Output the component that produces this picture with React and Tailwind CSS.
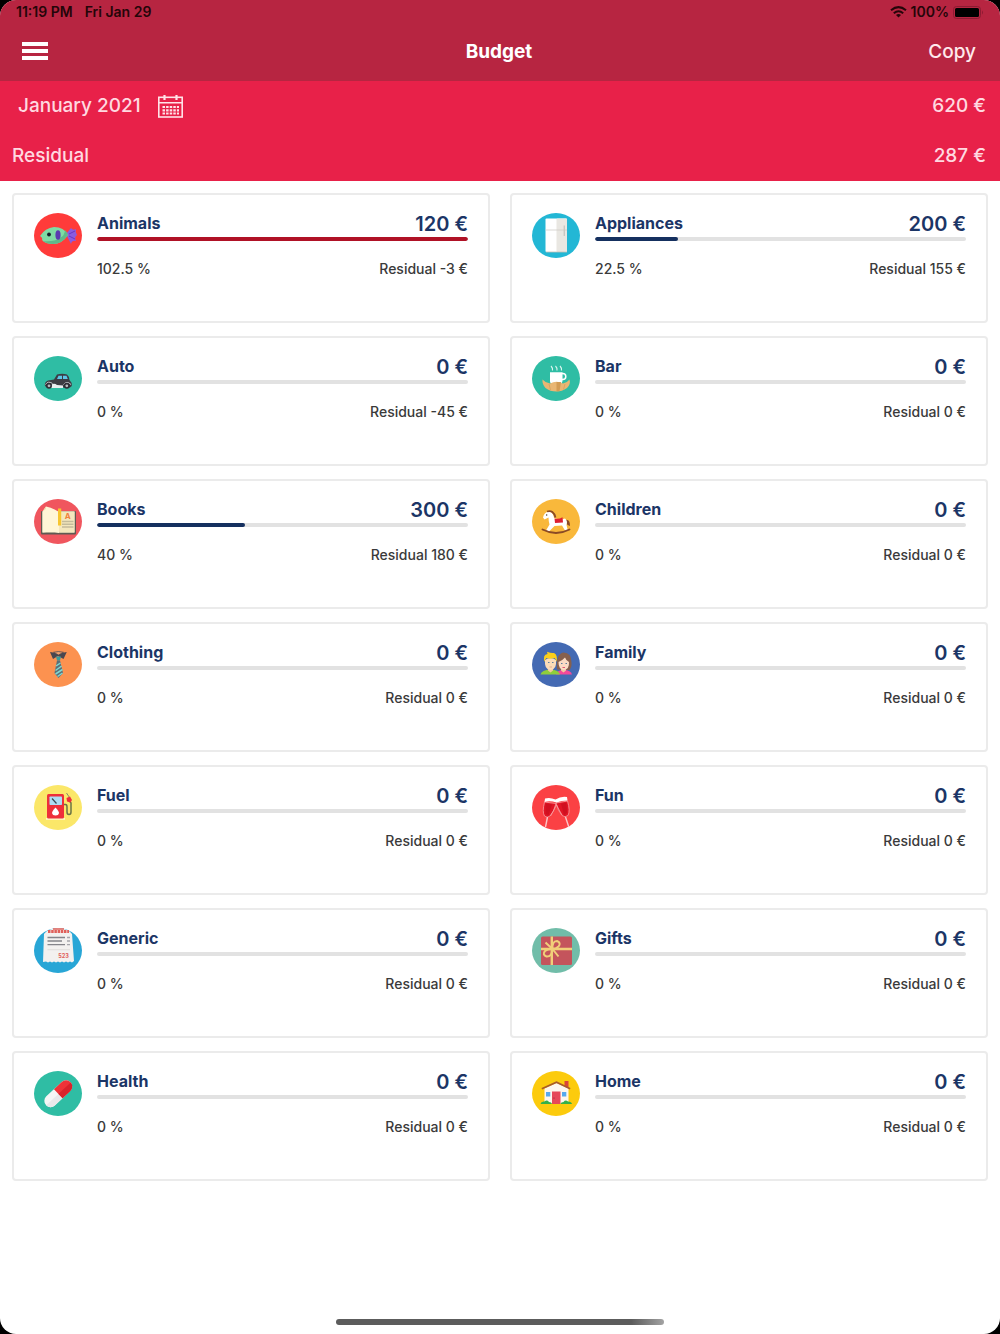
import React from "react";
import { clsx } from "clsx";

const categories = [
  { name: "Animals", budget: 120, percent: 102.5, residual: -3, icon: FishIcon },
  { name: "Appliances", budget: 200, percent: 22.5, residual: 155, icon: FridgeIcon },
  { name: "Auto", budget: 0, percent: 0, residual: -45, icon: CarIcon },
  { name: "Bar", budget: 0, percent: 0, residual: 0, icon: BarIcon },
  { name: "Books", budget: 300, percent: 40, residual: 180, icon: BookIcon },
  { name: "Children", budget: 0, percent: 0, residual: 0, icon: HorseIcon },
  { name: "Clothing", budget: 0, percent: 0, residual: 0, icon: TieIcon },
  { name: "Family", budget: 0, percent: 0, residual: 0, icon: FamilyIcon },
  { name: "Fuel", budget: 0, percent: 0, residual: 0, icon: FuelIcon },
  { name: "Fun", budget: 0, percent: 0, residual: 0, icon: GlassesIcon },
  { name: "Generic", budget: 0, percent: 0, residual: 0, icon: ReceiptIcon },
  { name: "Gifts", budget: 0, percent: 0, residual: 0, icon: GiftIcon },
  { name: "Health", budget: 0, percent: 0, residual: 0, icon: PillIcon },
  { name: "Home", budget: 0, percent: 0, residual: 0, icon: HouseIcon },
];

// every category icon is drawn on the same 48x45 disc
function Disc({ color, children }) {
  return (
    <svg viewBox="0 0 48 45" className="h-[45px] w-12 shrink-0" aria-hidden="true">
      <ellipse cx="24" cy="22.5" rx="24" ry="22.5" fill={color} />
      {children}
    </svg>
  );
}

function FishIcon() {
  return (
    <Disc color="#ff3b3a">
      <path d="M32 21 L37 15 Q39 18 42 16 Q41 19 43 22 Q40 24 42 28 Q38 27 37 31 Z" fill="#8a5be0" />
      <path d="M35 21 L41 18 M35 23 L41 26" stroke="#6a35c4" strokeWidth="1" />
      <path d="M6 23 Q11 15 20 14 Q30 14 34 22 Q28 31 19 31 Q11 31 8 27 Q9 25 6 23 Z" fill="#7fdca4" />
      <path d="M34 22 Q28 31 19 31 Q13 31 9 28 Q20 29 26 25 Q31 22 31 17 Q33 19 34 22 Z" fill="#5fb98a" />
      <circle cx="15" cy="21.5" r="1.9" fill="#16202a" />
      <ellipse cx="24" cy="22" rx="2.6" ry="4.8" fill="#5b3bb0" />
    </Disc>
  );
}

function FridgeIcon() {
  return (
    <Disc color="#23b7d5">
      <rect x="13.5" y="5.5" width="21.5" height="33.5" rx="1" fill="#ffffff" />
      <rect x="24.5" y="5.5" width="10.5" height="33.5" rx="1" fill="#e9e7e2" />
      <path d="M13.5 17 H35" stroke="#cfcdc8" strokeWidth="0.8" />
      <path d="M32.3 12.5 V23" stroke="#c9c7c2" strokeWidth="1.4" />
      <path d="M14 39 H35" stroke="#c6bfb4" strokeWidth="0.8" />
    </Disc>
  );
}

function CarIcon() {
  return (
    <Disc color="#2fbda4">
      <path d="M11 30 Q10 26 14 24.5 L20 23.5 L23 18.6 Q28 17 33 18.5 Q35 20 35.5 24 Q38 26 37.8 30 L36 31.5 H13 Z" fill="#3d3c44" />
      <path d="M17 29 Q20 26.5 23 29 L29 29.5 V32 H17 Z" fill="#e9eef0" />
      <path d="M11.5 28.500 Q14 24.500 18.500 27.500 M29.500 28.500 Q33 24.500 37 28.500" stroke="#d9dfe2" strokeWidth="0.9" fill="none" />
      <path d="M23 23 L24.5 19.8 H28 V23 Z M29 19.8 H32.5 L33.8 23 H29 Z" fill="#5cc6e8" />
      <circle cx="15" cy="29.8" r="3" fill="#2e2d35" />
      <circle cx="15" cy="29.8" r="1.4" fill="#b9bcc0" />
      <circle cx="32.8" cy="29.8" r="3" fill="#2e2d35" />
      <circle cx="32.8" cy="29.8" r="1.4" fill="#b9bcc0" />
    </Disc>
  );
}

function BarIcon() {
  return (
    <Disc color="#2fbda4">
      <path d="M19 10 Q21 12 20.5 14.5 M23.5 10 Q25.5 12 25 14.5 M28 10 Q30 12 29.5 14.5" stroke="#d8f5ee" strokeWidth="1.1" fill="none" />
      <circle cx="30.8" cy="20.5" r="3" fill="none" stroke="#ffffff" strokeWidth="1.5" />
      <path d="M18 16.2 H30.5 V25 Q30 28 27 28 H21 Q18 28 18 25 Z" fill="#ffffff" />
      <path d="M10.5 23.5 Q13 26.5 18 27.5 Q24.5 24 31 27.5 Q35.5 26.5 37.5 23.5 Q39 28 35 32 Q30 35.5 24.5 35.5 Q18 35.5 13.5 32 Q10 28 10.5 23.5 Z" fill="#e9b673" />
      <path d="M24.5 26 H29 L27.5 35.3 H24.5 Z" fill="#d39c55" />
      <path d="M17 28 L18.5 34 M33 28 L31.5 33.5" stroke="#d8a35f" strokeWidth="0.9" />
    </Disc>
  );
}

function BookIcon() {
  return (
    <Disc color="#f0565e">
      <rect x="7" y="12" width="35" height="23.5" rx="1" fill="#5f5a52" />
      <rect x="8.5" y="12.5" width="32" height="21" fill="#fdf3cf" />
      <rect x="25" y="12.5" width="15.5" height="21" fill="#f4e7bd" />
      <path d="M8.5 12.5 L12 7.5 Q18 8.5 25 13 V34 Q18 32 8.5 33.5 Z" fill="#fff6d6" />
      <path d="M8.5 12.5 L12 10 V7.5" fill="#f0dfae" />
      <rect x="24" y="9.5" width="3.2" height="17" fill="#f7c62f" />
      <text x="33.8" y="19.5" textAnchor="middle" fontSize="8" fontWeight="700" fill="#f0813c">
        A
      </text>
      <path d="M28 22.5 H39.5 M28 25.2 H39.5 M28 27.9 H39.5" stroke="#c4bb9a" strokeWidth="1.5" />
    </Disc>
  );
}

function HorseIcon() {
  return (
    <Disc color="#f9b83b">
      <path d="M33 21 Q38 19.5 38 27 Q35 26 33.5 23.5 Z" fill="#8a4a25" />
      <path d="M11 18.5 Q12 13.5 16.5 12.5 Q21.5 13 22 19 Q28 21.5 33 19.5 Q36 22 34.5 26 L36 32 L33 31.5 L30 26.5 L22.5 27 L17 32.5 L14 31.5 L17.5 25.5 Q16.5 22 16.5 18.5 L12.5 20.5 Z" fill="#ffffff" />
      <path d="M15 12.5 Q21.5 10.5 23.5 18.5" stroke="#8a4a25" strokeWidth="1.8" fill="none" />
      <path d="M22.5 19.5 Q27 20.5 30.5 18.3 L31 23.5 L23 24 Z" fill="#dd2032" />
      <circle cx="14.7" cy="16" r="0.7" fill="#3a2a20" />
      <path d="M10.5 30.5 Q24 37.5 37.5 30.5" stroke="#8a4a25" strokeWidth="1.9" fill="none" strokeLinecap="round" />
    </Disc>
  );
}

function TieIcon() {
  return (
    <Disc color="#fc9250">
      <path d="M16 10 L19 17 L24 14 L29.5 17 L32.8 10 L30 10.5 Q24.5 12.5 19 10.5 Z" fill="#4a4750" />
      <path d="M19.5 10.3 Q24.5 8.8 29.5 10.3 L24.5 13 Z" fill="#f3a06b" stroke="#4a4750" strokeWidth="0.8" />
      <path d="M22 14.5 H27 L26 18.5 H23 Z" fill="#3a9c9c" />
      <path d="M23 18.5 H26 L29 31 L24.5 36 L20.5 31 Z" fill="#5b6f78" />
      <path d="M22 24 L26.5 21 M21.5 28.5 L27.6 24 M21.5 32 L28.5 27.5 M23.5 34.5 L28.5 31" stroke="#7fd8d2" strokeWidth="1.5" />
    </Disc>
  );
}

function FamilyIcon() {
  return (
    <Disc color="#446ab3">
      <path d="M25 27.5 Q23.5 12 31.5 10.5 Q39.5 11 39.3 19 Q40.5 24 37.5 28 Z" fill="#86604d" />
      <path d="M24 32.5 Q25 28 31.5 28 Q39 28 40 32.5 Z" fill="#f4499a" />
      <path d="M8.5 32.5 Q9.5 28 18.5 27.5 Q27 28 28 32.5 Z" fill="#8fce3b" />
      <path d="M16 25 H21 V28.5 L18.5 30.5 L16 28.5 Z M29 25 H34 V28.5 L31.5 30.5 L29 28.5 Z" fill="#f2c8a0" />
      <path d="M13 18 Q18.5 14 24 18 Q25 27.5 18.5 28 Q12 27.5 13 18 Z" fill="#fbdcb8" />
      <path d="M26.5 20 Q31 18 33 15.5 Q34 18.5 37 20 Q37.5 27.5 31.7 28 Q26.5 27.5 26.5 20 Z" fill="#fbdcc4" />
      <path d="M12.5 20 Q10.5 12.5 15.5 12 L15 9.8 Q19.5 11.5 22 11 Q26 13 24.5 20 Q24 17 22.5 16 Q18 17.5 14.5 16 Q13 17 12.5 20 Z" fill="#fbcf1b" />
      <path d="M16 20.5 H17.5 M20 20.5 H21.5 M29 21.5 H30.5 M33.5 21.5 H35" stroke="#5b7fa0" strokeWidth="1" />
      <path d="M17.5 25 H20" stroke="#d99a7a" strokeWidth="0.7" />
      <path d="M30.5 25.5 H33" stroke="#e2466a" strokeWidth="0.9" />
    </Disc>
  );
}

function FuelIcon() {
  return (
    <Disc color="#fbe769">
      <path d="M29.5 19.5 H31.5 Q33 19.5 33 22 V27 Q33 29.5 35 29.5 Q37 29.5 37 27 V18 L35 15" stroke="#6b7445" strokeWidth="1.5" fill="none" />
      <path d="M32.5 8 L35.5 12.5" stroke="#8b8a6a" strokeWidth="1" />
      <path d="M32.5 13 L36 11.5 L38 15 L36.5 17.5 L33 16.5 Z" fill="#ee2f3a" />
      <rect x="12" y="33" width="19" height="1.8" fill="#fff6c9" />
      <rect x="13" y="9" width="17" height="24.5" rx="1.5" fill="#ee2f3a" />
      <rect x="15.5" y="11.5" width="12.5" height="8.5" rx="0.8" fill="#aeddf4" />
      <path d="M18 13.5 L22.5 18.5" stroke="#3a4a55" strokeWidth="1.2" />
      <path d="M21.5 22.5 Q25 26 25 28 Q24.5 30.5 21.5 30.5 Q18.5 30.5 18 28 Q18 26 21.5 22.5 Z" fill="#ffffff" />
    </Disc>
  );
}

function GlassesIcon() {
  return (
    <Disc color="#fb4144">
      <path d="M12.5 17 Q10 27 12.5 31 Q15 33.5 18 31 Q22 27 24 18.5 Z" fill="#e01525" stroke="#f7a0a2" strokeWidth="0.8" />
      <path d="M35.5 16 Q38.5 26 36 30.5 Q33 33 30 30.5 Q26 26 24 18 Z" fill="#e01525" stroke="#f7a0a2" strokeWidth="0.8" />
      <path d="M13.5 18.5 L20 19.5 L16.5 30 L13.5 29 Z M29 18.5 L34.5 18 L35 28 L32 30 Z" fill="#d01020" />
      <path d="M13 13.5 Q18 12 23.5 14.5 Q29 11 35 12 L35.5 15.5 Q29 15.5 24.5 17.5 Q18 15.5 12.5 17 Z" fill="#ffffff" />
      <path d="M15.5 32 L13.5 42 M33.5 32 L36.8 42" stroke="#fbc6c7" strokeWidth="1.4" />
      <path d="M18.5 31 L24.5 20 L30 30" stroke="#f9a9ab" strokeWidth="0.7" fill="none" />
    </Disc>
  );
}

function ReceiptIcon() {
  return (
    <Disc color="#28a6d6">
      <path d="M10 6 Q14 0.5 24 0 Q34 0.5 38 6 L40 33 L38 34.5 L36 33.5 L34 34.5 L32 33.5 L30 34.5 L28 33.5 L26 34.5 L24 33.5 L22 34.5 L20 33.5 L18 34.5 L16 33.5 L14 34.5 L12 33.5 L9 34 Z" fill="#f3f1ef" />
      <path d="M14 3.5 H35" stroke="#e0605a" strokeWidth="3" strokeDasharray="2.5 0.7" />
      <path d="M19 1 H30" stroke="#e0605a" strokeWidth="1.5" />
      <path d="M13.5 9.5 H31 M13.5 13 H28 M13.5 16.7 H31" stroke="#85858a" strokeWidth="1.3" />
      <path d="M33 9.5 H36 M33 13 H36 M33 16.7 H36" stroke="#a5a5aa" strokeWidth="1.3" />
      <path d="M13.5 21.7 H36" stroke="#d8d5d2" strokeWidth="0.7" />
      <text x="29.5" y="30.2" textAnchor="middle" fontSize="5.5" fontWeight="700" fill="#e0605a">
        523
      </text>
    </Disc>
  );
}

function GiftIcon() {
  return (
    <Disc color="#71bda9">
      <rect x="9" y="8.5" width="31" height="28.5" rx="1.5" fill="#c4545c" />
      <path d="M19.8 8.5 V37 M9 21 H40" stroke="#f1cf79" strokeWidth="2.4" />
      <path d="M20.5 21 Q20 13 25 13 Q29.5 15 26.5 18.5 Q24 21 20.5 21 Q20 29 14.5 28.5 Q10 26.5 13 23 Q16 20.5 20.5 21 Z" stroke="#f1cf79" strokeWidth="2" fill="none" />
      <path d="M20.5 21 L13.5 14.5 M20.5 21 L26.5 28.5" stroke="#f1cf79" strokeWidth="2" />
    </Disc>
  );
}

function PillIcon() {
  return (
    <Disc color="#2fbda4">
      <g transform="rotate(-43 24.2 22.7)">
        <rect x="7.5" y="16.5" width="33.5" height="12.5" rx="6.2" fill="#f6f6f6" />
        <path d="M24.2 16.5 H34.8 A6.2 6.2 0 0 1 34.8 29 H24.2 Z" fill="#ee3338" />
        <path d="M7.500 23 H24.2 V29 H13.7 A6.2 6.2 0 0 1 7.5 23 Z" fill="#e9e9eb" />
        <path d="M24.2 23 H41 A6.2 6.2 0 0 1 34.8 29 H24.2 Z" fill="#d9222b" />
      </g>
    </Disc>
  );
}

function HouseIcon() {
  return (
    <Disc color="#fccb0d">
      <rect x="32.5" y="10" width="4" height="8" fill="#d8453a" />
      <path d="M12.5 17.5 L24.5 12 L36.5 17.5 V32.5 H12.5 Z" fill="#fdf6ee" />
      <path d="M9.8 17.8 L24.5 11.2 L38.2 17.8" stroke="#a85a2a" strokeWidth="1.5" fill="none" />
      <rect x="14" y="21" width="4.3" height="4.5" fill="#57a9ee" />
      <rect x="30" y="21" width="4.3" height="4.5" fill="#57a9ee" />
      <rect x="20" y="20.5" width="8.5" height="12.5" fill="#e6485a" />
      <circle cx="22" cy="27" r="0.6" fill="#8a2030" />
      <path d="M8.5 33 Q9 30 12.5 30.5 Q15 28.5 17 31 Q19.5 31 20 33 Z M28.5 33 Q29 31 31.5 31 Q33.5 28.5 36 30.5 Q39.5 30.5 40 33 Z" fill="#35b04a" />
    </Disc>
  );
}

function CalendarIcon() {
  return (
    <svg viewBox="0 0 25 23" className="h-[23px] w-[25px]" fill="none" stroke="#ffe3e8" aria-hidden="true">
      <rect x="0.8" y="2.3" width="23.4" height="19.7" strokeWidth="1.6" />
      <path d="M1 7.8 H24" strokeWidth="1.6" />
      <path d="M6.5 0 V5 M18.5 0 V5" strokeWidth="2.2" />
      <path d="M4.5 12 H21 M4.5 15.3 H21 M4.5 18.5 H21" strokeWidth="2.2" strokeDasharray="2.5 1.1" />
    </svg>
  );
}

function WifiIcon() {
  return (
    <svg viewBox="0 0 17 12" className="h-3 w-[17px]" fill="none" stroke="#250509" strokeWidth="2" aria-hidden="true">
      <path d="M1 4.3 Q8.5 -2 16 4.3" />
      <path d="M3.8 7.2 Q8.5 3.2 13.2 7.2" />
      <path d="M8.5 11.5 L6 8.9 Q8.5 7 11 8.9 Z" fill="#250509" stroke="none" />
    </svg>
  );
}

function BatteryIcon() {
  return (
    <svg viewBox="0 0 31 13" className="h-[13px] w-[31px]" aria-hidden="true">
      <rect x="0.5" y="0.5" width="27" height="12" rx="3" fill="none" stroke="#8d1b32" />
      <rect x="2" y="2" width="24" height="9" rx="1.5" fill="#000000" />
      <path d="M29 4.5 Q31 6.5 29 8.5 Z" fill="#8d1b32" />
    </svg>
  );
}

function CategoryCard({ category }) {
  const { name, budget, percent, residual, icon: Icon } = category;

  return (
    <li className="flex h-[130px] gap-[15px] rounded-sm border-2 border-[#ebebeb] pt-[18px] pr-5 pl-5">
      <Icon />
      <div className="flex-1">
        <div className="flex h-6 items-center justify-between text-[#1b3566]">
          <h2 className="pb-1 text-base font-bold">{name}</h2>
          <span className="pb-0.5 text-xl font-semibold">{budget} €</span>
        </div>
        <div
          role="progressbar"
          aria-label={name}
          aria-valuenow={percent}
          className="h-1 overflow-hidden rounded-full bg-[#e2e2e2]"
        >
          <div
            className={clsx("h-full rounded-full", percent > 100 ? "bg-[#b01226]" : "bg-[#15305f]")}
            style={{ width: `${Math.min(percent, 100)}%` }}
          />
        </div>
        <div className="mt-[18px] flex justify-between text-sm font-medium text-[#3a3a3a]">
          <span>{percent} %</span>
          <span>Residual {residual} €</span>
        </div>
      </div>
    </li>
  );
}

function App() {
  return (
    <div className="bg-black font-['Inter','Liberation_Sans',sans-serif]">
      <div className="flex min-h-screen flex-col overflow-hidden rounded-2xl bg-white">
        <header className="bg-[#b72541]">
          <div className="flex h-6 items-center justify-between pr-4 pl-4 text-sm font-semibold text-[#250509]">
            <div className="flex gap-3">
              <span>11:19 PM</span>
              <span>Fri Jan 29</span>
            </div>
            <div className="flex items-center gap-1">
              <WifiIcon />
              <span>100%</span>
              <BatteryIcon />
            </div>
          </div>
          <div className="grid h-[57px] grid-cols-3 items-center pr-6 pl-[22px] text-[19px] text-white">
            <button aria-label="Menu" className="flex w-[26px] flex-col gap-[3px] pb-1">
              <span className="h-1 bg-white" />
              <span className="h-1 bg-white" />
              <span className="h-1 bg-white" />
            </button>
            <h1 className="text-center font-bold">Budget</h1>
            <button className="justify-self-end font-medium text-[#ffe9ec]">Copy</button>
          </div>
        </header>

        <section className="bg-[#e82149] pr-3.5 pl-3 text-[19px] font-medium text-[#ffd9e0]">
          <div className="flex h-[50px] items-center justify-between">
            <button className="flex items-center gap-[17px] pl-1.5">
              January 2021
              <CalendarIcon />
            </button>
            <span>620 €</span>
          </div>
          <div className="flex h-[50px] items-center justify-between">
            <span>Residual</span>
            <span>287 €</span>
          </div>
        </section>

        <main className="flex-1 px-3 pt-3">
          <ul className="grid grid-cols-2 gap-x-5 gap-y-[13px]">
            {categories.map((category) => (
              <CategoryCard key={category.name} category={category} />
            ))}
          </ul>
        </main>

        <footer className="flex justify-center pt-4 pb-[9px]">
          <div className="h-1.5 w-[328px] rounded-full bg-linear-to-r from-[#5c5c5c] from-90% to-[#a3a3a3]" />
        </footer>
      </div>
    </div>
  );
}

export default App;
